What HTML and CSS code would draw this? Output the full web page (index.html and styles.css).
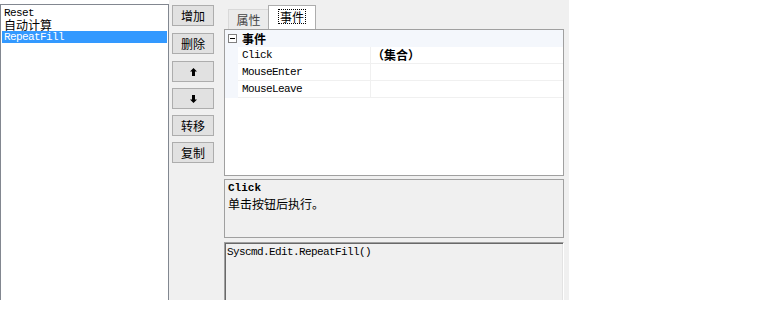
FILE: index.html
```html
<!DOCTYPE html>
<html lang="zh-CN">
<head>
  <meta charset="utf-8">
  <title>按钮事件编辑</title>
  <link rel="stylesheet" href="styles.css">
</head>
<body>
  <div class="app">
    <!-- Command list -->
    <div class="listbox">
      <div class="item">Reset</div>
      <div class="item cjk">自动计算</div>
      <div class="item selected">RepeatFill</div>
    </div>

    <div class="panel">
      <!-- Command buttons -->
      <div class="buttons">
        <button class="btn">增加</button>
        <button class="btn">删除</button>
        <button class="btn">
          <svg width="7" height="8" viewBox="0 0 7 8"><polygon points="3.5,0 7,3.5 5,3.5 5,8 2,8 2,3.5 0,3.5" fill="#000"/></svg>
        </button>
        <button class="btn">
          <svg width="7" height="8" viewBox="0 0 7 8"><polygon points="3.5,8 7,4.5 5,4.5 5,0 2,0 2,4.5 0,4.5" fill="#000"/></svg>
        </button>
        <button class="btn">转移</button>
        <button class="btn">复制</button>
      </div>

      <!-- Property editor -->
      <div class="editor">
        <div class="tabs">
          <div class="tab">属性</div>
          <div class="tab active"><span class="focus">事件</span></div>
        </div>

        <div class="grid">
          <div class="category">
            <svg class="toggle" width="9" height="9" viewBox="0 0 9 9"><rect x="0.5" y="0.5" width="8" height="8" fill="#fff" stroke="#808080"/><rect x="2" y="4" width="5" height="1" fill="#000"/></svg>
            <span class="cat-name">事件</span>
          </div>
          <div class="row">
            <div class="margin"></div>
            <div class="name">Click</div>
            <div class="value">（集合）</div>
          </div>
          <div class="row">
            <div class="margin"></div>
            <div class="name">MouseEnter</div>
            <div class="value"></div>
          </div>
          <div class="row">
            <div class="margin"></div>
            <div class="name">MouseLeave</div>
            <div class="value"></div>
          </div>
        </div>

        <div class="desc">
          <div class="desc-title">Click</div>
          <div class="desc-text">单击按钮后执行。</div>
        </div>

        <div class="code">Syscmd.Edit.RepeatFill()</div>
      </div>
    </div>
  </div>
</body>
</html>
```

FILE: styles.css
```css
body {
  margin: 0;
  background-color: #fff;
  font-family: "Liberation Mono", "Noto Sans CJK SC", monospace;
  font-size: 11px;
  color: #000;
}

.app {
  display: flex;
  width: 569px;
  height: 300px;
  overflow: hidden;
}

.listbox {
  box-sizing: border-box;
  width: 169px;
  height: 300px;
  margin-top: 4px;
  padding: 2px 1px 0 1px;
  border: 1px solid #828790;
  border-bottom: none;
  background-color: #fff;
  flex-shrink: 0;
}

.item {
  height: 12px;
  line-height: 12px;
  padding-left: 2px;
  letter-spacing: -0.6px;
  white-space: nowrap;
}

.item.cjk {
  font-family: "Noto Sans CJK SC", sans-serif;
  font-size: 12px;
  letter-spacing: 0;
}

.item.selected {
  background-color: #3399ff;
  color: #fff;
}

.panel {
  flex: 1;
  display: flex;
  background-color: #f0f0f0;
}

.buttons {
  display: flex;
  flex-direction: column;
  width: 42px;
  padding: 5px 0 0 3px;
}

.btn {
  box-sizing: border-box;
  width: 42px;
  height: 21px;
  margin: 0 0 6px 0;
  padding: 0;
  border: 1px solid #adadad;
  background-color: #e1e1e1;
  font-family: "Noto Sans CJK SC", sans-serif;
  font-size: 12px;
  line-height: 18px;
  color: #000;
  display: flex;
  align-items: center;
  justify-content: center;
  flex-shrink: 0;
}

.btn:nth-child(1),
.btn:nth-child(2) {
  margin-bottom: 7px;
}

.editor {
  width: 340px;
  margin-left: 10px;
  display: flex;
  flex-direction: column;
}

.editor > div {
  flex-shrink: 0;
}

.tabs {
  height: 29px;
  display: flex;
  align-items: flex-end;
  padding-left: 4px;
}

.tab {
  box-sizing: border-box;
  width: 41px;
  height: 20px;
  border: 1px solid #d9d9d9;
  border-bottom: none;
  background-color: #ebebeb;
  font-family: "Noto Sans CJK SC", sans-serif;
  font-size: 12px;
  color: #444;
  display: flex;
  align-items: center;
  justify-content: center;
}

.tab.active {
  width: 48px;
  height: 24px;
  margin-left: -1px;
  border-color: #adadad;
  background-color: #fff;
  color: #000;
  padding-bottom: 2px;
}

.focus {
  border: 1px dotted #000;
  padding: 0 1px;
  line-height: 13px;
}

.grid {
  box-sizing: border-box;
  height: 147px;
  border: 1px solid #a0a0a0;
  background-color: #fff;
}

.category {
  height: 17px;
  display: flex;
  align-items: center;
  background-color: #f4f7fc;
}

.toggle {
  margin-left: 3px;
}

.cat-name {
  margin-left: 5px;
  font-family: "Noto Sans CJK SC", sans-serif;
  font-size: 12px;
  font-weight: bold;
}

.row {
  display: flex;
  height: 17px;
}

.margin {
  width: 13px;
  background-color: #f4f7fc;
}

.name {
  box-sizing: border-box;
  width: 133px;
  padding-left: 4px;
  line-height: 16px;
  border-bottom: 1px solid #f0f0f0;
  border-right: 1px solid #f0f0f0;
  letter-spacing: -0.6px;
}

.value {
  flex: 1;
  padding-left: 1px;
  line-height: 16px;
  border-bottom: 1px solid #f0f0f0;
  font-family: "Noto Sans CJK SC", sans-serif;
  font-size: 12px;
  font-weight: bold;
}

.desc {
  box-sizing: border-box;
  height: 59px;
  margin-top: 3px;
  padding: 2px 3px;
  border: 1px solid #a0a0a0;
}

.desc-title {
  font-weight: bold;
  line-height: 13px;
}

.desc-text {
  font-family: "Noto Sans CJK SC", sans-serif;
  font-size: 12px;
  line-height: 17px;
}

.code {
  box-sizing: border-box;
  height: 70px;
  margin-top: 4px;
  padding: 3px 2px;
  border: 1px solid;
  border-color: #a0a0a0 #fff #fff #a0a0a0;
  box-shadow: inset 1px 1px #696969, inset -1px -1px #e3e3e3;
  letter-spacing: -0.6px;
  line-height: 13px;
}
```
